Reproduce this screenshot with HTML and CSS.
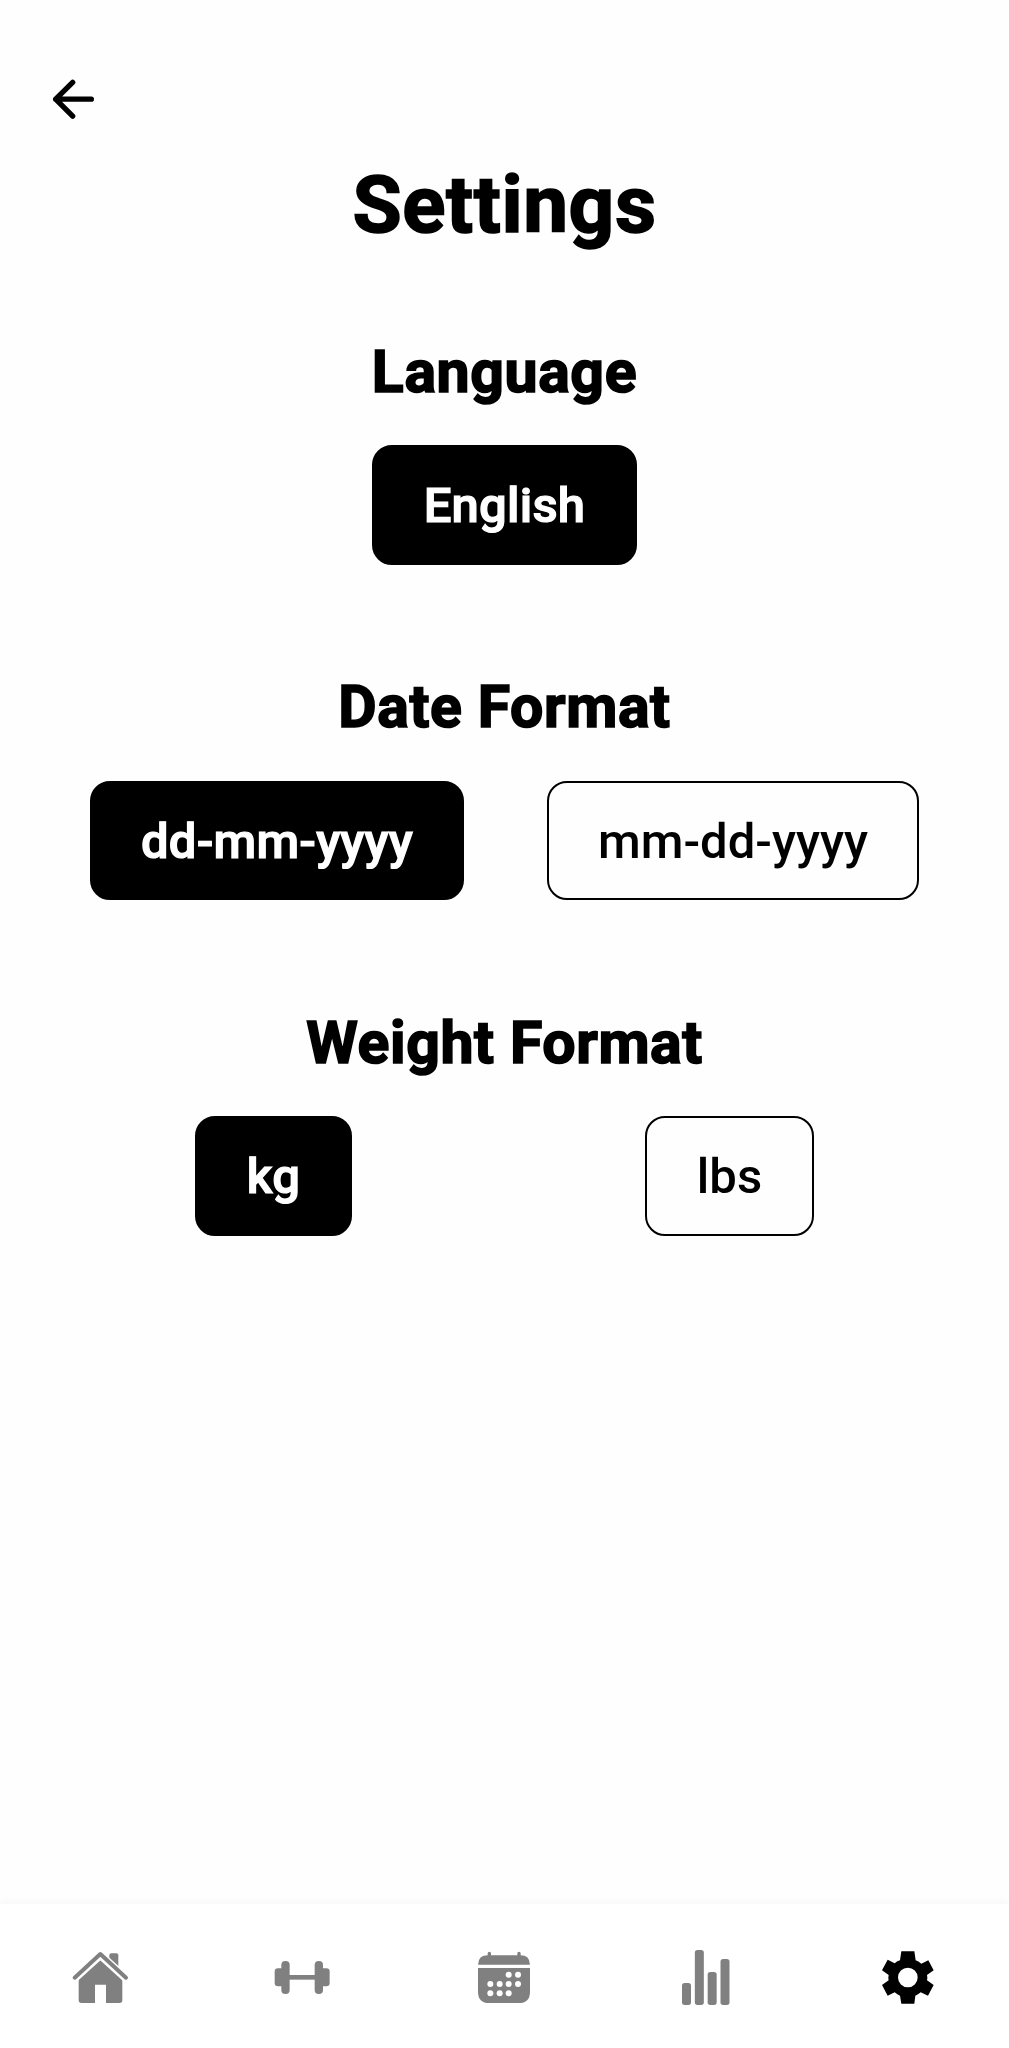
FILE: index.html
```html
<!DOCTYPE html>
<html lang="en">
<head>
<meta charset="utf-8">
<title>Settings</title>
<link rel="stylesheet" href="styles.css">
</head>
<body>
<header class="topbar">
  <a class="back" href="#" aria-label="Back">
    <svg viewBox="0 0 240 240"><path d="M98 67 47 117.500l51 51M47 117.500h107"/></svg>
  </a>
</header>
<main class="content">
  <h1 class="title">Settings</h1>
  <section class="group">
    <h2 class="heading">Language</h2>
    <div class="options"><button class="option selected">English</button></div>
  </section>
  <section class="group">
    <h2 class="heading">Date Format</h2>
    <div class="options"><button class="option selected">dd-mm-yyyy</button><button class="option">mm-dd-yyyy</button></div>
  </section>
  <section class="group">
    <h2 class="heading">Weight Format</h2>
    <div class="options"><button class="option selected">kg</button><button class="option">lbs</button></div>
  </section>
</main>
<nav class="tabs">
  <a class="tab" href="#" aria-label="Home"><svg viewBox="0 0 240 270">
    <path d="M121 88 187 148V211q0 8-8 8H138V164H105V219H64q-8 0-8-8V148Z"/>
    <path d="M148 84V76q0-6 6-6h15q6 0 6 6v38Z"/>
    <path class="roof-gap" d="M44 145 121 75l77 70"/>
    <path class="roof" d="M44 143 121 72l77 71"/>
  </svg></a>
  <a class="tab" href="#" aria-label="Workouts"><svg viewBox="0 0 240 270">
    <rect x="38" y="115" width="30" height="54" rx="10"/><rect x="58" y="93" width="25" height="99" rx="12"/>
    <rect x="80" y="135" width="82" height="14"/>
    <rect x="158" y="93" width="25" height="99" rx="12"/><rect x="174" y="115" width="29" height="54" rx="10"/>
  </svg></a>
  <a class="tab" href="#" aria-label="Calendar"><svg viewBox="0 0 240 270">
    <path d="M42 104Q43 76 71 76V70q0-5 5-5t5 5v6h79V70q0-5 5-5t5 5v6q27 0 28 28Z"/>
    <path d="M42 114H198V185Q198 219 164 219H76Q42 219 42 185Z"/>
    <g class="dots"><circle cx="134" cy="134" r="9"/><circle cx="162" cy="134" r="9"/>
    <circle cx="79" cy="162" r="9"/><circle cx="107" cy="162" r="9"/><circle cx="134" cy="162" r="9"/><circle cx="162" cy="162" r="9"/>
    <circle cx="79" cy="190" r="9"/><circle cx="107" cy="190" r="9"/><circle cx="134" cy="190" r="9"/></g>
  </svg></a>
  <a class="tab" href="#" aria-label="Statistics"><svg viewBox="0 0 240 270">
    <rect x="48" y="159" width="27" height="66" rx="8"/><rect x="86.500" y="60" width="27" height="165" rx="8"/>
    <rect x="125" y="126" width="27" height="99" rx="8"/><rect x="163.500" y="87" width="27" height="138" rx="8"/>
  </svg></a>
  <a class="tab active" href="#" aria-label="Settings"><svg viewBox="0 0 240 270">
    <path fill-rule="evenodd" d="M100 64H139L143 91Q151 94 160 101L181 91 197 121 177 135Q179 143 177 151L197 165 180 197 158 187Q150 194 142 197L139 221H100L96 197Q88 194 80 187L59 197 42 165 62 151Q60 143 62 135L42 121 59 89 80 100Q88 93 96 91ZM119.500 113a29.500 29.500 0 1 0 0 59a29.500 29.500 0 1 0 0-59Z"/>
  </svg></a>
</nav>
</body>
</html>
```
FILE: styles.css
```css
* { box-sizing: border-box; }
body {
  margin: 0;
  height: 2048px;
  display: flex;
  flex-direction: column;
  background: #fefefe;
  color: #000;
  font-family: Roboto, sans-serif;
}
svg { display: block; width: 100%; height: 100%; }
.topbar { height: 158px; padding: 60px 0 0 40px; }
.back { display: block; width: 80px; height: 80px; }
.back path {
  fill: none;
  stroke: #000;
  stroke-width: 16;
  stroke-linecap: round;
  stroke-linejoin: round;
}
.content { flex: 1; padding: 0 48.5px; }
.title, .heading {
  font-weight: 700;
  letter-spacing: 0.6px;
  text-align: center;
  -webkit-text-stroke: 1.6px #000;
}
.title {
  margin: 0 0 84.5px;
  font-size: 80px;
  line-height: 94px;
}
.group { margin-bottom: 107.5px; }
.heading {
  margin: 0 0 38.5px;
  font-size: 59px;
  line-height: 70px;
}
.options { display: flex; justify-content: space-around; }
.option {
  height: 119.5px;
  padding: 3px 49.5px 0;
  border: 2.5px solid #000;
  border-radius: 20px;
  background: #fefefe;
  color: #000;
  font: 500 49px/58px Roboto, sans-serif;
}
.option.selected {
  background: #000;
  color: #fff;
  letter-spacing: 0.2px;
  -webkit-text-stroke: 1.2px #fff;
}
.tabs {
  display: flex;
  justify-content: space-between;
  height: 144px;
  padding: 26px 61px 0 60px;
  background: #fff;
  box-shadow: 0 -2px 8px rgba(0, 0, 0, 0.035);
}
.tab { width: 80px; height: 90px; }
.tab svg { fill: #808080; }
.tab.active svg { fill: #000; }
.tab .dots { fill: #fff; }
.roof, .roof-gap { fill: none; stroke-linecap: round; stroke-linejoin: round; }
.roof-gap { stroke: #fff; stroke-width: 24; }
.roof { stroke: #808080; stroke-width: 12; }
```
